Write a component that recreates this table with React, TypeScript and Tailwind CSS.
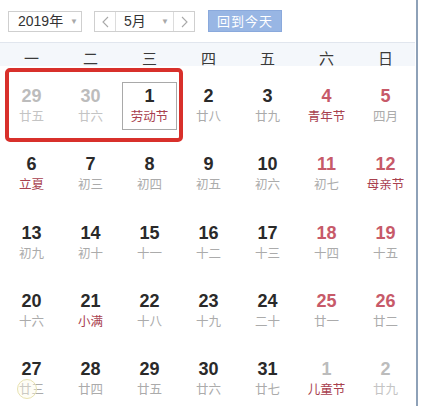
import React from "react"

type Day = { n: number; sub: string; other?: boolean; red?: boolean; fest?: boolean; sel?: boolean }

const weeks: Day[][] = [
  [
    { n: 29, sub: "廿五", other: true },
    { n: 30, sub: "廿六", other: true },
    { n: 1, sub: "劳动节", fest: true, sel: true },
    { n: 2, sub: "廿八" },
    { n: 3, sub: "廿九" },
    { n: 4, sub: "青年节", red: true, fest: true },
    { n: 5, sub: "四月", red: true },
  ],
  [
    { n: 6, sub: "立夏", fest: true },
    { n: 7, sub: "初三" },
    { n: 8, sub: "初四" },
    { n: 9, sub: "初五" },
    { n: 10, sub: "初六" },
    { n: 11, sub: "初七", red: true },
    { n: 12, sub: "母亲节", red: true, fest: true },
  ],
  [
    { n: 13, sub: "初九" },
    { n: 14, sub: "初十" },
    { n: 15, sub: "十一" },
    { n: 16, sub: "十二" },
    { n: 17, sub: "十三" },
    { n: 18, sub: "十四", red: true },
    { n: 19, sub: "十五", red: true },
  ],
  [
    { n: 20, sub: "十六" },
    { n: 21, sub: "小满", fest: true },
    { n: 22, sub: "十八" },
    { n: 23, sub: "十九" },
    { n: 24, sub: "二十" },
    { n: 25, sub: "廿一", red: true },
    { n: 26, sub: "廿二", red: true },
  ],
  [
    { n: 27, sub: "廿三" },
    { n: 28, sub: "廿四" },
    { n: 29, sub: "廿五" },
    { n: 30, sub: "廿六" },
    { n: 31, sub: "廿七" },
    { n: 1, sub: "儿童节", other: true, fest: true },
    { n: 2, sub: "廿九", other: true },
  ],
]

const weekdays = ["一", "二", "三", "四", "五", "六", "日"]

const cjk = "font-['Noto_Sans_CJK_SC',sans-serif]"

function Caret() {
  return <span className="text-[8px] text-[#a8a8a8]">▼</span>
}

function Cell({ d }: { d: Day }) {
  const numColor = d.other ? "text-[#bcbcbc]" : d.red ? "text-[#c75a69]" : "text-[#2a2a2a]"
  const subColor = d.fest ? "text-[#a8404e]" : d.other ? "text-[#c4c4c4]" : "text-[#ababab]"
  return (
    <div className="h-[68.3px] px-[2px] pt-[16px]">
      <div
        className={
          "h-[48px] flex flex-col items-center border " +
          (d.sel ? "border-[#a9a9a9]" : "border-transparent")
        }
      >
        <div className={"mt-[4px] h-[19px] leading-[19px] text-[18px] font-bold font-['Liberation_Sans',Arial,sans-serif] " + numColor}>
          {d.n}
        </div>
        <div className={"mt-[2px] h-[15px] leading-[15px] text-[12.5px] " + cjk + " " + subColor}>{d.sub}</div>
      </div>
    </div>
  )
}

export default function App() {
  return (
    <div className={"w-[421px] h-[406px] bg-white overflow-hidden relative " + cjk}>
      {/* right edge line */}
      <div className="absolute left-[416px] top-0 w-[2px] h-full bg-[#8ea1b8]" />

      {/* toolbar */}
      <div className="h-[42px] flex items-start pt-[11px] pl-[8px] gap-[12px] text-[13px] text-[#333]">
        <div className="w-[74px] h-[21px] border border-[#cfcfcf] flex items-center justify-between pl-[9px] pr-[3px] text-[14px] font-['Liberation_Sans','Noto_Sans_CJK_SC',sans-serif]">
          <span>2019年</span>
          <Caret />
        </div>
        <div className="h-[21px] flex border border-[#cfcfcf]">
          <div className="w-[21px] flex items-center justify-center border-r border-[#dcdcdc]">
            <svg width="7" height="12" viewBox="0 0 7 12"><path d="M6 1 L1 6 L6 11" fill="none" stroke="#a8a8a8" strokeWidth="1.1" /></svg>
          </div>
          <div className="w-[58px] flex items-center justify-between pl-[8px] pr-[4px] border-r border-[#dcdcdc] text-[14px] font-['Liberation_Sans','Noto_Sans_CJK_SC',sans-serif]">
            <span>5月</span>
            <Caret />
          </div>
          <div className="w-[20px] flex items-center justify-center">
            <svg width="7" height="12" viewBox="0 0 7 12"><path d="M1 1 L6 6 L1 11" fill="none" stroke="#a8a8a8" strokeWidth="1.1" /></svg>
          </div>
        </div>
        <div className="ml-[1px] -mt-[1px] w-[74px] h-[22px] bg-[#98b6e4] border border-[#8aa9dc] text-white text-[13px] flex items-center justify-center tracking-[1px]">
          回到今天
        </div>
      </div>

      {/* weekday header */}
      <div className="w-[415px] border-t border-[#e1e6ee] bg-[#f4f7fb] grid grid-cols-7 pl-[2px] h-[24px]">
        {weekdays.map((w) => (
          <div key={w} className="flex items-center justify-center text-[15px] text-[#3a3a3a] pt-[4px]">
            {w}
          </div>
        ))}
      </div>

      {/* days */}
      <div className="relative pl-[2px] w-[415px]">
        {weeks.map((wk, i) => (
          <div key={i} className="grid grid-cols-7">
            {wk.map((d, j) => (
              <Cell key={j} d={d} />
            ))}
          </div>
        ))}
        {/* red highlight */}
        <div className="absolute left-[5px] top-[2px] w-[178px] h-[74px] border-[4px] border-[#d8302b] rounded-[5px]" />
        {/* faint cursor ring */}
        <div className="absolute left-[17px] top-[313px] w-[20px] h-[20px] rounded-full border border-[#e8e2b0] bg-[#fdfbe8]/40" />
      </div>
    </div>
  )
}
